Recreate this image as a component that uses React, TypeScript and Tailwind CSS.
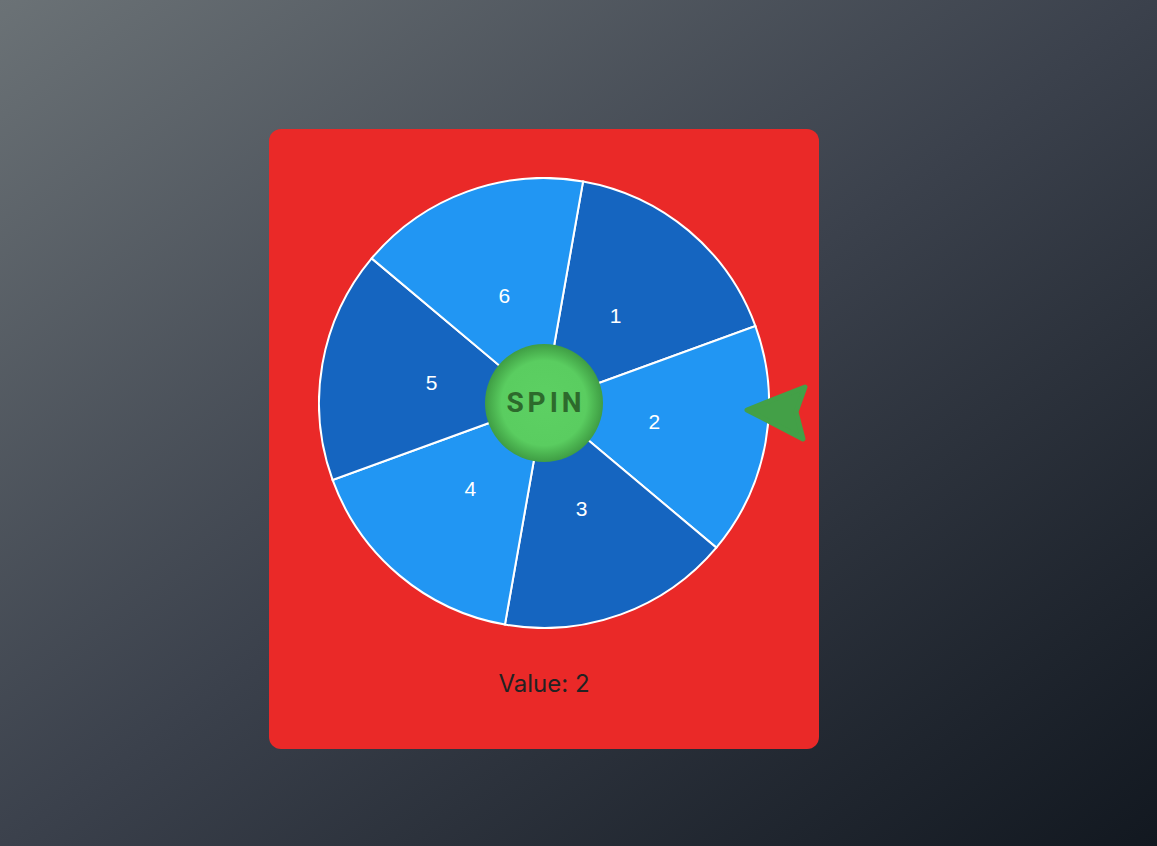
import React from 'react';

const segments = [1, 2, 3, 4, 5, 6];
const R = 225;
const C = 226;

function pt(angle: number, r: number) {
  const a = (angle * Math.PI) / 180;
  return [C + r * Math.cos(a), C + r * Math.sin(a)];
}

function Wheel() {
  return (
    <svg width="452" height="452" viewBox="0 0 452 452" className="block">
      {segments.map((n, i) => {
        const start = -80 + 60 * i;
        const end = start + 60;
        const [x1, y1] = pt(start, R);
        const [x2, y2] = pt(end, R);
        const [lx, ly] = pt(start + 30, 113);
        return (
          <g key={n}>
            <path
              d={`M ${C} ${C} L ${x1} ${y1} A ${R} ${R} 0 0 1 ${x2} ${y2} Z`}
              fill={i % 2 === 0 ? '#1565c0' : '#2196f3'}
              stroke="#ffffff"
              strokeWidth="2"
            />
            <text
              x={lx - 1}
              y={ly - 1}
              fill="#ffffff"
              fontSize="21"
              textAnchor="middle"
              dominantBaseline="central"
              fontFamily="'Liberation Sans', Arial, sans-serif"
            >
              {n}
            </text>
          </g>
        );
      })}
    </svg>
  );
}

export default function App() {
  return (
    <main className="min-h-screen bg-linear-to-br from-[#6b7276] via-[#3b414c] to-[#121820] pl-[269px] pt-[129px] pb-[98px]">
      <div className="w-[550px] bg-[#ea2928] rounded-[12px] flex flex-col items-center pt-[48px] pb-[47px]">
        <div className="relative w-[452px] h-[452px]">
          <Wheel />
          <button
            className="absolute left-[167px] top-[167px] w-[118px] h-[118px] rounded-full flex items-center justify-center text-[28px] font-bold tracking-[4px] text-[#2d6a2c] pl-[4px]"
            style={{
              background:
                'radial-gradient(circle closest-side, #5dd063 0%, #5acd60 72%, #4cb551 86%, #3f9d44 100%)',
              fontFamily: 'Roboto, "Liberation Sans", sans-serif',
            }}
          >
            SPIN
          </button>
          <svg
            className="absolute left-[422px] top-[203px]"
            width="72"
            height="64"
            viewBox="0 0 72 64"
          >
            <polygon
              points="7,30 65,7 56,32 63,59"
              fill="#43a047"
              stroke="#43a047"
              strokeWidth="5"
              strokeLinejoin="round"
            />
          </svg>
        </div>
        <p className="mt-[37px] text-[24px] text-[#222222] font-['Inter',sans-serif] leading-[36px]">
          Value: 2
        </p>
      </div>
    </main>
  );
}
